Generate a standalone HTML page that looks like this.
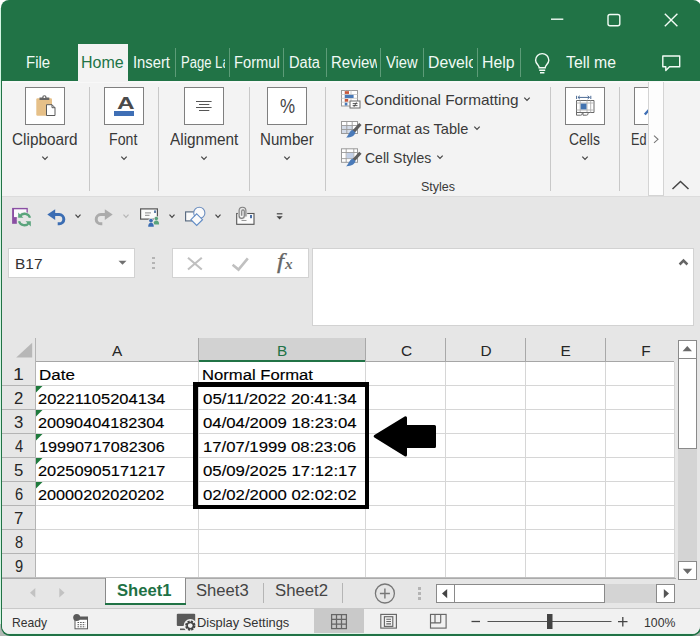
<!DOCTYPE html><html><head><meta charset="utf-8"><title>Excel</title><style>
html,body{margin:0;padding:0;background:#fff;}#w{position:relative;width:700px;height:636px;overflow:hidden;background:#fff;font-family:"Liberation Sans",sans-serif;}#w div,#w svg,#w span{position:absolute;display:block;}#w span.t{white-space:nowrap;line-height:1;transform-origin:0 0;}#w span.c{overflow:hidden;}#w span.c span.t{left:0;top:0;}
</style></head><body><div id="w">
<div style="left:0px;top:0px;width:700px;height:636px;background:#ffffff;"></div>
<div style="left:0px;top:8px;width:1px;height:620px;background:#d3f5e2;"></div>
<div style="left:0px;top:624px;width:12px;height:12px;background:#b3b9b5;"></div>
<div style="left:688px;top:624px;width:12px;height:12px;background:#a9b3ad;"></div>
<div style="left:1px;top:0px;width:700px;height:636px;background:#217346;border-radius:8px 8px 9px 9px;"></div>
<div style="left:2px;top:81px;width:698px;height:553.4px;background:#e6e6e6;border-radius:0 0 8px 8px;"></div>
<div style="left:2px;top:81px;width:698px;height:115px;background:#f3f3f3;"></div>
<div style="left:2px;top:81px;width:698px;height:2px;background:#f8f8f8;"></div>
<div style="left:2px;top:196px;width:698px;height:1px;background:#dcdcdc;"></div>
<div style="left:78px;top:44px;width:50px;height:38px;background:#f3f3f3;"></div>
<div style="left:175px;top:48px;width:1px;height:29px;background:#5d9c78;"></div>
<div style="left:229px;top:48px;width:1px;height:29px;background:#5d9c78;"></div>
<div style="left:283px;top:48px;width:1px;height:29px;background:#5d9c78;"></div>
<div style="left:326px;top:48px;width:1px;height:29px;background:#5d9c78;"></div>
<div style="left:380px;top:48px;width:1px;height:29px;background:#5d9c78;"></div>
<div style="left:423px;top:48px;width:1px;height:29px;background:#5d9c78;"></div>
<div style="left:477px;top:48px;width:1px;height:29px;background:#5d9c78;"></div>
<div style="left:520px;top:48px;width:1px;height:29px;background:#5d9c78;"></div>
<svg style="left:540px;top:5px;" width="150" height="30" viewBox="540 5 150 30"><g stroke="#f2fbf5" stroke-width="1.4" fill="none"><path d="M551 19.2H563.3"/><rect x="608" y="14.5" width="11.8" height="11.3" rx="2"/><path d="M664.8 13.8L677.4 26.2M677.4 13.8L664.8 26.2"/></g></svg>
<svg style="left:530px;top:50px;" width="26" height="26" viewBox="530 50 26 26"><g stroke="#f2fbf5" stroke-width="1.4" fill="none"><path d="M539.2 67.8C539.2 65 535.6 63.8 535.6 60.2a6.6 6.6 0 0 1 13.2 0c0 3.6-3.6 4.800-3.600 7.600z"/><path d="M539.2 70.300h6M540 72.700h4.400"/></g></svg>
<svg style="left:658px;top:52px;" width="28" height="22" viewBox="658 52 28 22"><path d="M662.800 56H679.700V66.800H669.500L665.800 70.400V66.800H662.800z" stroke="#f2fbf5" stroke-width="1.400" fill="none" stroke-linejoin="round"/></svg>
<div style="left:89px;top:87px;width:1px;height:104px;background:#c8c8c8;"></div>
<div style="left:158px;top:87px;width:1px;height:104px;background:#c8c8c8;"></div>
<div style="left:249px;top:87px;width:1px;height:104px;background:#c8c8c8;"></div>
<div style="left:325px;top:87px;width:1px;height:104px;background:#c8c8c8;"></div>
<div style="left:550px;top:87px;width:1px;height:104px;background:#c8c8c8;"></div>
<div style="left:619px;top:87px;width:1px;height:104px;background:#c8c8c8;"></div>
<div style="left:25px;top:87px;width:40px;height:38px;background:#ffffff;box-sizing:border-box;border:1px solid #7f7f7f;"></div>
<svg style="left:39px;top:153.2px;" width="12" height="10" viewBox="39 153.2 12 10"><path d="M42.3 156.75L45 159.64999999999998L47.7 156.75" stroke="#444" stroke-width="1.2" fill="none"/></svg>
<div style="left:104px;top:87px;width:40px;height:38px;background:#ffffff;box-sizing:border-box;border:1px solid #7f7f7f;"></div>
<svg style="left:118px;top:153.2px;" width="12" height="10" viewBox="118 153.2 12 10"><path d="M121.3 156.75L124 159.64999999999998L126.7 156.75" stroke="#444" stroke-width="1.2" fill="none"/></svg>
<div style="left:184px;top:87px;width:40px;height:38px;background:#ffffff;box-sizing:border-box;border:1px solid #7f7f7f;"></div>
<svg style="left:198px;top:153.2px;" width="12" height="10" viewBox="198 153.2 12 10"><path d="M201.3 156.75L204 159.64999999999998L206.7 156.75" stroke="#444" stroke-width="1.2" fill="none"/></svg>
<div style="left:267px;top:87px;width:40px;height:38px;background:#ffffff;box-sizing:border-box;border:1px solid #7f7f7f;"></div>
<svg style="left:281px;top:153.2px;" width="12" height="10" viewBox="281 153.2 12 10"><path d="M284.3 156.75L287 159.64999999999998L289.7 156.75" stroke="#444" stroke-width="1.2" fill="none"/></svg>
<div style="left:565px;top:87px;width:40px;height:38px;background:#ffffff;box-sizing:border-box;border:1px solid #7f7f7f;"></div>
<svg style="left:579px;top:153.2px;" width="12" height="10" viewBox="579 153.2 12 10"><path d="M582.3 156.75L585 159.64999999999998L587.7 156.75" stroke="#444" stroke-width="1.2" fill="none"/></svg>
<div style="left:634px;top:87px;width:14px;height:38px;background:#ffffff;box-sizing:border-box;border:1px solid #7f7f7f;border-right:none;"></div>
<svg style="left:25px;top:87px;" width="40" height="38" viewBox="25 87 40 38"><rect x="36.300" y="98.200" width="15.700" height="17.600" rx="1.200" fill="#e6c088"/><path d="M39.500 100v-2.600h2.700a2.200 2.200 0 0 1 4.400 0h2.700v2.600z" fill="#666"/><circle cx="44.400" cy="97.200" r="0.900" fill="#fff"/><path d="M46.500 104.700h5.500l3 3v7.800h-8.500z" fill="#fff" stroke="#5a5a5a" stroke-width="1"/><path d="M52 104.700v3h3" fill="none" stroke="#5a5a5a" stroke-width="1"/></svg>
<div style="left:114px;top:111px;width:20px;height:4.5px;background:#3f6fb5;"></div>
<svg style="left:184px;top:87px;" width="40" height="38" viewBox="184 87 40 38"><g stroke="#555" stroke-width="1"><path d="M196 101.500h15.600M199 104.500h10.300M196 107.500h15.600M199 110.500h10.300"/></g></svg>
<svg style="left:565px;top:87px;" width="40" height="38" viewBox="565 87 40 38"><g fill="none" stroke="#4a6a94" stroke-width="1"><path d="M578 97.400h11.500M576.600 95.800v3.200M590.800 95.800v3.200"/><path d="M579.800 95.800l-1.800 1.600l1.800 1.600M587.600 95.800l1.800 1.600l-1.800 1.600"/></g><path d="M576.500 100.500h17.500v12h-6v1.200a1.500 1.500 0 0 1-1.500 1.500h-3.500v-2.700h-0.800v1.200a1.500 1.500 0 0 1-1.500 1.500h-4.200z" fill="#fff" stroke="#6a6a6a" stroke-width="1"/><path d="M576.500 103h17.500M576.500 110h17.500M580.200 100.500v12M587 100.500v12M590.700 100.500v12" fill="none" stroke="#b0b0b0" stroke-width="0.900"/><path d="M576.500 112.500h11.500" stroke="#6a6a6a" stroke-width="1"/><rect x="580.700" y="103.600" width="5.800" height="5.800" fill="#4273b0"/></svg>
<svg style="left:634px;top:87px;" width="15" height="38" viewBox="634 87 15 38"><path d="M644.800 114.500l4-4.500" stroke="#3f6fb5" stroke-width="2.400" fill="none"/></svg>
<svg style="left:521px;top:94px;" width="12" height="10" viewBox="521 94 12 10"><path d="M524.3 97.55L527 100.45L529.7 97.55" stroke="#444" stroke-width="1.2" fill="none"/></svg>
<svg style="left:471px;top:123px;" width="12" height="10" viewBox="471 123 12 10"><path d="M474.3 126.55L477 129.45L479.7 126.55" stroke="#444" stroke-width="1.2" fill="none"/></svg>
<svg style="left:433.6px;top:152px;" width="12" height="10" viewBox="433.6 152 12 10"><path d="M436.90000000000003 155.55L439.6 158.45L442.3 155.55" stroke="#444" stroke-width="1.2" fill="none"/></svg>
<svg style="left:336px;top:86px;" width="30" height="84" viewBox="336 86 30 84"><rect x="341.500" y="90.500" width="16" height="15.500" fill="#fff" stroke="#9a9a9a" stroke-width="1"/><path d="M341.500 94.500h16M341.500 98.300h16M341.500 102.200h16M345.300 90.500v15.500M351 90.500v15.500" stroke="#c9c9c9" stroke-width="0.900" fill="none"/><rect x="344.800" y="91.200" width="4.200" height="2.700" fill="#c8573a"/><rect x="344.800" y="94.900" width="8.800" height="3.100" fill="#4a7ab8"/><rect x="344.800" y="99" width="3.400" height="2.700" fill="#c8573a"/><rect x="344.800" y="102.800" width="2.600" height="2.700" fill="#4a7ab8"/><rect x="350" y="101" width="10" height="7" fill="#fff" stroke="#6a6a6a" stroke-width="1"/><path d="M352.700 103.600h4.800M352.700 105.600h4.800M356.400 102.400l-2.400 4.400" stroke="#444" stroke-width="0.900" fill="none"/><rect x="341.500" y="121.500" width="16" height="12" fill="#fff" stroke="#9a9a9a" stroke-width="1"/><rect x="342" y="125.500" width="11" height="7.500" fill="#d3dbe8"/><path d="M341.500 125.500h16M341.500 129.500h16M346.800 121.500v12M352.200 121.500v12" stroke="#9a9a9a" stroke-width="0.900" fill="none"/><g transform="translate(0,0)"><path d="M360.400 124l-6.800 7.600" stroke="#5e5e5e" stroke-width="3.200" stroke-linecap="butt" fill="none"/><path d="M352.300 129.800l3.200 2.600c-0.800 3-4 5.400-9.600 5.200c2.600-1.400 2.600-5.400 6.400-7.800z" fill="#4a7ab8"/></g><rect x="341.500" y="148.800" width="16" height="13.500" fill="#fff" stroke="#9a9a9a" stroke-width="1"/><path d="M341.500 152.500h16M341.500 158.600h16M346.200 148.800v13.500M353.800 148.800v13.500" stroke="#9a9a9a" stroke-width="0.900" fill="none"/><rect x="346.700" y="153" width="6.700" height="5.200" fill="#c3d0e6"/><g transform="translate(0,28.7)"><path d="M360.400 124l-6.800 7.600" stroke="#5e5e5e" stroke-width="3.200" stroke-linecap="butt" fill="none"/><path d="M352.300 129.800l3.200 2.600c-0.800 3-4 5.400-9.600 5.200c2.600-1.400 2.600-5.400 6.400-7.800z" fill="#4a7ab8"/></g></svg>
<svg style="left:0px;top:197px;" width="700" height="43" viewBox="0 197 700 43"><rect x="12.100" y="207.900" width="15.700" height="15.900" fill="#8a4fa3"/><rect x="14" y="209.300" width="12.500" height="7.800" fill="#fbf9fc"/><rect x="16.800" y="217.100" width="11.500" height="7.500" fill="#e6e6e6"/><circle cx="24.500" cy="219.500" r="7.600" fill="#e6e6e6"/><g fill="none" stroke="#5aa47c" stroke-width="2.300"><path d="M30 217.800a5.600 5.600 0 0 0-10-1.600"/><path d="M19 221.200a5.600 5.600 0 0 0 10 1.600"/></g><path d="M18.200 212.600v5.200h5.200z" fill="#5aa47c"/><path d="M30.800 226.400v-5.200h-5.200z" fill="#5aa47c"/><path d="M47.300 214.600L55.200 209.300V219.900z" fill="#3b6db3"/><path d="M54.500 214.600h4.700a4.600 4.600 0 0 1 0 9.200h-1.500" fill="none" stroke="#3b6db3" stroke-width="3"/><path d="M112.700 214.600L104.800 209.300V219.900z" fill="#ababab"/><path d="M105.500 214.600h-4.700a4.600 4.600 0 0 0 0 9.200h1.500" fill="none" stroke="#ababab" stroke-width="3"/><rect x="140.600" y="208.900" width="16.800" height="10.200" fill="#fbfbfb" stroke="#555" stroke-width="1.200"/><path d="M145 212.900h6M145 215.300h4.500" stroke="#8a8a8a" stroke-width="1"/><rect x="154.200" y="210.400" width="1.600" height="2.600" fill="#3a5f95"/><circle cx="156.300" cy="218.600" r="2.500" fill="#e6e6e6"/><path d="M152.600 225.200c0-3.600 1.300-5 3.700-5s3.700 1.400 3.700 5z" fill="#e6e6e6"/><circle cx="156.300" cy="218.600" r="1.750" fill="#5aa47c"/><path d="M153.500 224.400c0-2.700 1-3.800 2.800-3.800s2.800 1.100 2.800 3.800z" fill="#5aa47c"/><circle cx="151" cy="220.600" r="2.600" fill="#e6e6e6"/><path d="M147.300 227.300c0-3.700 1.300-5.200 3.700-5.200s3.700 1.500 3.700 5.200z" fill="#e6e6e6"/><circle cx="151" cy="220.600" r="1.850" fill="#3b6db3"/><path d="M148.200 226.700c0-2.800 1-4 2.800-4s2.800 1.200 2.800 4z" fill="#3b6db3"/><rect x="185.600" y="211.900" width="9.200" height="9" fill="#fafafa" stroke="#586a80" stroke-width="1.150"/><circle cx="199.300" cy="212.900" r="5.600" fill="#fafafa" stroke="#6d8fc0" stroke-width="1.100"/><path d="M196.700 213.900l5.800 5.800l-5.800 5.800l-5.800-5.800z" fill="#fafafa" stroke="#5f8ac4" stroke-width="1.100"/><rect x="236.700" y="213.500" width="17.300" height="10.800" fill="#fbfbfb" stroke="#555" stroke-width="1.100"/><rect x="250" y="215" width="2" height="3.200" fill="#4a6fa5"/><path d="M241.500 220.500h5" stroke="#999" stroke-width="1"/><path d="M245.900 216.500V210.600a3.400 3.400 0 0 0-6.800 0V215.800a2.600 2.600 0 0 0 5.200 0V211.200a1.300 1.300 0 0 0-2.600 0v4.600" fill="none" stroke="#e6e6e6" stroke-width="2.600"/><path d="M245.900 216.500V210.600a3.400 3.400 0 0 0-6.800 0V215.800a2.600 2.600 0 0 0 5.200 0V211.200a1.300 1.300 0 0 0-2.600 0v4.600" fill="none" stroke="#808080" stroke-width="1.150"/><path d="M276.800 213.800h5.600" stroke="#444" stroke-width="1.200"/><path d="M276.500 216.200h6.200l-3.100 3.300z" fill="#444"/></svg>
<svg style="left:72px;top:211.3px;" width="12" height="10" viewBox="72 211.3 12 10"><path d="M75.5 214.95000000000002L78 217.65L80.5 214.95000000000002" stroke="#444" stroke-width="1.2" fill="none"/></svg>
<svg style="left:120px;top:211.3px;" width="12" height="10" viewBox="120 211.3 12 10"><path d="M123.5 214.95000000000002L126 217.65L128.5 214.95000000000002" stroke="#b5b5b5" stroke-width="1.2" fill="none"/></svg>
<svg style="left:166px;top:211.3px;" width="12" height="10" viewBox="166 211.3 12 10"><path d="M169.5 214.95000000000002L172 217.65L174.5 214.95000000000002" stroke="#444" stroke-width="1.2" fill="none"/></svg>
<svg style="left:212px;top:211.3px;" width="12" height="10" viewBox="212 211.3 12 10"><path d="M215.5 214.95000000000002L218 217.65L220.5 214.95000000000002" stroke="#444" stroke-width="1.2" fill="none"/></svg>
<div style="left:8px;top:248px;width:127px;height:30px;background:#fff;box-sizing:border-box;border:1px solid #d2d2d2;"></div>
<div style="left:152px;top:256.5px;width:3px;height:2.5px;background:#b4b4b4;"></div>
<div style="left:152px;top:261.5px;width:3px;height:2.5px;background:#b4b4b4;"></div>
<div style="left:152px;top:266.5px;width:3px;height:2.5px;background:#b4b4b4;"></div>
<div style="left:172px;top:248px;width:137px;height:30px;background:#fff;box-sizing:border-box;border:1px solid #d2d2d2;"></div>
<svg style="left:100px;top:248px;" width="220" height="30" viewBox="100 248 220 30"><path d="M118.500 260.800h8l-4 4z" fill="#707070"/><path d="M188 257.700L201.800 269.500M201.800 257.700L188 269.500" stroke="#c0c0c0" stroke-width="2.100" fill="none"/><path d="M232.600 264.800L238.500 269.600L247.800 258.300" stroke="#c0c0c0" stroke-width="2.600" fill="none"/></svg>
<div style="left:312px;top:248px;width:382px;height:78px;background:#fff;box-sizing:border-box;border:1px solid #d2d2d2;"></div>
<svg style="left:676px;top:256px;" width="14" height="12" viewBox="676 256 14 12"><path d="M679.600 264.500L683.500 260.600L687.400 264.500" stroke="#666" stroke-width="2.500" fill="none"/></svg>
<div style="left:36px;top:362px;width:638px;height:216px;background:#fff;"></div>
<div style="left:199px;top:338px;width:166px;height:23px;background:#d2d2d2;"></div>
<div style="left:36px;top:361px;width:638px;height:1px;background:#a6a6a6;"></div>
<div style="left:199px;top:360px;width:167px;height:2px;background:#217346;"></div>
<div style="left:35px;top:338px;width:1px;height:240px;background:#b4b4b4;"></div>
<div style="left:198px;top:338px;width:1px;height:24px;background:#a8a8a8;"></div>
<div style="left:198px;top:362px;width:1px;height:216px;background:#d6d6d6;"></div>
<div style="left:365px;top:338px;width:1px;height:24px;background:#a8a8a8;"></div>
<div style="left:365px;top:362px;width:1px;height:216px;background:#d6d6d6;"></div>
<div style="left:445px;top:338px;width:1px;height:24px;background:#a8a8a8;"></div>
<div style="left:445px;top:362px;width:1px;height:216px;background:#d6d6d6;"></div>
<div style="left:525px;top:338px;width:1px;height:24px;background:#a8a8a8;"></div>
<div style="left:525px;top:362px;width:1px;height:216px;background:#d6d6d6;"></div>
<div style="left:605px;top:338px;width:1px;height:24px;background:#a8a8a8;"></div>
<div style="left:605px;top:362px;width:1px;height:216px;background:#d6d6d6;"></div>
<div style="left:674px;top:362px;width:1px;height:216px;background:#d6d6d6;"></div>
<div style="left:2px;top:385px;width:33px;height:1px;background:#b4b4b4;"></div>
<div style="left:36px;top:385px;width:638px;height:1px;background:#d6d6d6;"></div>
<div style="left:2px;top:409px;width:33px;height:1px;background:#b4b4b4;"></div>
<div style="left:36px;top:409px;width:638px;height:1px;background:#d6d6d6;"></div>
<div style="left:2px;top:433px;width:33px;height:1px;background:#b4b4b4;"></div>
<div style="left:36px;top:433px;width:638px;height:1px;background:#d6d6d6;"></div>
<div style="left:2px;top:457px;width:33px;height:1px;background:#b4b4b4;"></div>
<div style="left:36px;top:457px;width:638px;height:1px;background:#d6d6d6;"></div>
<div style="left:2px;top:481px;width:33px;height:1px;background:#b4b4b4;"></div>
<div style="left:36px;top:481px;width:638px;height:1px;background:#d6d6d6;"></div>
<div style="left:2px;top:505px;width:33px;height:1px;background:#b4b4b4;"></div>
<div style="left:36px;top:505px;width:638px;height:1px;background:#d6d6d6;"></div>
<div style="left:2px;top:529px;width:33px;height:1px;background:#b4b4b4;"></div>
<div style="left:36px;top:529px;width:638px;height:1px;background:#d6d6d6;"></div>
<div style="left:2px;top:553px;width:33px;height:1px;background:#b4b4b4;"></div>
<div style="left:36px;top:553px;width:638px;height:1px;background:#d6d6d6;"></div>
<div style="left:2px;top:577px;width:33px;height:1px;background:#b4b4b4;"></div>
<div style="left:36px;top:577px;width:638px;height:1px;background:#d6d6d6;"></div>
<div style="left:2px;top:577px;width:673px;height:1px;background:#bfbfbf;"></div>
<svg style="left:14px;top:340px;" width="22" height="22" viewBox="14 340 22 22"><path d="M32.200 342.800v14.800h-16z" fill="#b7b7b7"/></svg>
<svg style="left:36px;top:386px;" width="7" height="7" viewBox="0 0 7 7"><path d="M0 0h6.500L0 6.500z" fill="#1e7a3c"/></svg>
<svg style="left:36px;top:410px;" width="7" height="7" viewBox="0 0 7 7"><path d="M0 0h6.500L0 6.500z" fill="#1e7a3c"/></svg>
<svg style="left:36px;top:434px;" width="7" height="7" viewBox="0 0 7 7"><path d="M0 0h6.500L0 6.500z" fill="#1e7a3c"/></svg>
<svg style="left:36px;top:458px;" width="7" height="7" viewBox="0 0 7 7"><path d="M0 0h6.500L0 6.500z" fill="#1e7a3c"/></svg>
<svg style="left:36px;top:482px;" width="7" height="7" viewBox="0 0 7 7"><path d="M0 0h6.500L0 6.500z" fill="#1e7a3c"/></svg>
<div style="left:678px;top:449px;width:19px;height:113px;background:#d4d4d4;"></div>
<div style="left:678px;top:340px;width:19px;height:19px;background:#fff;box-sizing:border-box;border:1px solid #8a8a8a;"></div>
<div style="left:678px;top:359px;width:19px;height:90px;background:#fff;box-sizing:border-box;border:1px solid #8a8a8a;border-top:none;"></div>
<div style="left:678px;top:561px;width:19px;height:19px;background:#fff;box-sizing:border-box;border:1px solid #8a8a8a;"></div>
<svg style="left:678px;top:340px;" width="19" height="240" viewBox="678 340 19 240"><path d="M682.600 351.300h9.400l-4.700-5.300z" fill="#6a6a6a"/><path d="M682.800 568.700h9.400l-4.700 5.300z" fill="#6a6a6a"/></svg>
<svg style="left:20px;top:580px;" width="60" height="26" viewBox="20 580 60 26"><path d="M35.300 588v9.500L30 592.700z" fill="#c2c2c2"/><path d="M59.300 588v9.500L64.600 592.700z" fill="#c2c2c2"/></svg>
<div style="left:2px;top:578px;width:674px;height:1px;background:#ababab;"></div>
<div style="left:106px;top:578px;width:79px;height:25px;background:#fff;"></div>
<div style="left:105px;top:603px;width:81px;height:2px;background:#217346;"></div>
<div style="left:105px;top:578px;width:1px;height:25px;background:#8a8a8a;"></div>
<div style="left:185px;top:578px;width:1px;height:25px;background:#8a8a8a;"></div>
<div style="left:263px;top:583px;width:1px;height:20px;background:#b5b5b5;"></div>
<div style="left:342px;top:583px;width:1px;height:20px;background:#b5b5b5;"></div>
<svg style="left:370px;top:580px;" width="30" height="28" viewBox="370 580 30 28"><circle cx="384.900" cy="593.500" r="9.500" fill="none" stroke="#777" stroke-width="1.300"/><path d="M384.900 588.500v10M379.900 593.500h10" stroke="#777" stroke-width="1.400"/></svg>
<div style="left:418px;top:586.5px;width:3px;height:3px;background:#b4b4b4;"></div>
<div style="left:418px;top:591.5px;width:3px;height:3px;background:#b4b4b4;"></div>
<div style="left:418px;top:596.5px;width:3px;height:3px;background:#b4b4b4;"></div>
<div style="left:604px;top:584px;width:52px;height:19px;background:#d4d4d4;"></div>
<div style="left:436px;top:584px;width:19px;height:19px;background:#fff;box-sizing:border-box;border:1px solid #8a8a8a;"></div>
<div style="left:454px;top:584px;width:151px;height:19px;background:#fff;box-sizing:border-box;border:1px solid #8a8a8a;"></div>
<div style="left:656px;top:584px;width:19px;height:19px;background:#fff;box-sizing:border-box;border:1px solid #8a8a8a;"></div>
<svg style="left:436px;top:584px;" width="240" height="19" viewBox="436 584 240 19"><path d="M447.200 589v9.200L442 593.600z" fill="#444"/><path d="M663.800 589v9.200L669 593.600z" fill="#555"/></svg>
<div style="left:2px;top:609px;width:698px;height:25.4px;background:#f1f1f1;border-radius:0 0 8px 8px;"></div>
<div style="left:10px;top:633px;width:682px;height:1px;background:#e2f3e9;"></div>
<div style="left:2px;top:608px;width:698px;height:1px;background:#c9c9c9;"></div>
<div style="left:314px;top:609px;width:50px;height:24.4px;background:#c9c9c9;"></div>
<svg style="left:0px;top:609px;" width="700" height="27" viewBox="0 609 700 27"><rect x="75" y="619" width="12.500" height="9.800" fill="#fff" stroke="#5a5a5a" stroke-width="1"/><path d="M77.500 622.500h8M77.500 624.700h8M77.500 626.800h8" stroke="#5a5a5a" stroke-width="1" stroke-dasharray="1.600 1"/><circle cx="76.700" cy="617.400" r="3.500" fill="#5a5a5a"/><rect x="76.500" y="616.500" width="11.500" height="3" fill="#5a5a5a"/><rect x="176.800" y="613.800" width="18.400" height="12.300" rx="1" fill="#5a5a5a"/><path d="M180 629.300h7" stroke="#5a5a5a" stroke-width="1.600"/><circle cx="190.300" cy="625.600" r="6.600" fill="#f1f1f1"/><circle cx="190.300" cy="625.600" r="3.900" fill="none" stroke="#444" stroke-width="2.600" stroke-dasharray="2 1.060"/><circle cx="190.300" cy="625.600" r="3.200" fill="none" stroke="#444" stroke-width="1.500"/><g fill="none" stroke="#666" stroke-width="1.250"><rect x="331.600" y="614.600" width="14.800" height="14"/><path d="M331.600 619.300h14.800M331.600 624h14.800M336.500 614.600v14M341.500 614.600v14"/></g><g fill="none" stroke="#666" stroke-width="1.150"><rect x="380.800" y="614.400" width="15.600" height="13.700"/><rect x="384.400" y="616.700" width="8.400" height="9.700"/><path d="M386.300 619.200h4.700M386.300 621.500h4.700M386.300 623.800h4.700"/></g><g fill="none" stroke="#666" stroke-width="1.150"><rect x="430.500" y="614.400" width="15.600" height="13.700"/><path d="M435 614.400v8.400M440.700 614.400v8.400M430.500 622.800h10.200"/></g><path d="M471.500 621.500h8.500" stroke="#444" stroke-width="1.300"/><path d="M487.500 621.500h124" stroke="#555" stroke-width="1"/><rect x="547" y="614" width="5.500" height="15" fill="#444"/><path d="M618 621.700h9.500M622.800 617v9.500" stroke="#444" stroke-width="1.300"/></svg>
<span class="t" id="t0" style="left:26px;top:55px;font-size:15.6px;color:#f1faf5;font-weight:400;font-family:'Liberation Sans', sans-serif;transform:scaleX(0.9583);">File</span>
<span class="t" id="t1" style="left:81px;top:55px;font-size:15.6px;color:#217346;font-weight:400;font-family:'Liberation Sans', sans-serif;transform:scaleX(1.0250);">Home</span>
<span class="t" id="t2" style="left:133px;top:55px;font-size:15.6px;color:#f1faf5;font-weight:400;font-family:'Liberation Sans', sans-serif;transform:scaleX(0.9474);">Insert</span>
<span class="c" style="left:180.75px;top:55px;width:44.45px;height:20.3px;"><span class="t" id="t3" style="font-size:15.6px;color:#f1faf5;font-weight:400;font-family:'Liberation Sans', sans-serif;transform:scaleX(0.8373);">Page La</span></span>
<span class="t" id="t4" style="left:233.75px;top:55px;font-size:15.6px;color:#f1faf5;font-weight:400;font-family:'Liberation Sans', sans-serif;transform:scaleX(0.9419);">Formul</span>
<span class="t" id="t5" style="left:289px;top:55px;font-size:15.6px;color:#f1faf5;font-weight:400;font-family:'Liberation Sans', sans-serif;transform:scaleX(0.9375);">Data</span>
<span class="c" style="left:330.5px;top:55px;width:46px;height:20.3px;"><span class="t" id="t6" style="font-size:15.6px;color:#f1faf5;font-weight:400;font-family:'Liberation Sans', sans-serif;transform:scaleX(0.9612);">Review</span></span>
<span class="t" id="t7" style="left:386px;top:55px;font-size:15.6px;color:#f1faf5;font-weight:400;font-family:'Liberation Sans', sans-serif;transform:scaleX(0.9412);">View</span>
<span class="c" style="left:427.5px;top:55px;width:45.5px;height:20.3px;"><span class="t" id="t8" style="font-size:15.6px;color:#f1faf5;font-weight:400;font-family:'Liberation Sans', sans-serif;transform:scaleX(1.0108);">Develo</span></span>
<span class="t" id="t9" style="left:482px;top:55px;font-size:15.6px;color:#f1faf5;font-weight:400;font-family:'Liberation Sans', sans-serif;transform:scaleX(1.0164);">Help</span>
<span class="t" id="t10" style="left:565.75px;top:55px;font-size:15.6px;color:#f1faf5;font-weight:400;font-family:'Liberation Sans', sans-serif;transform:scaleX(1.0130);">Tell me</span>
<span class="t" id="t11" style="left:12px;top:132px;font-size:15.7px;color:#383838;font-weight:400;font-family:'Liberation Sans', sans-serif;transform:scaleX(0.9777);">Clipboard</span>
<span class="t" id="t12" style="left:108.5px;top:132px;font-size:15.7px;color:#383838;font-weight:400;font-family:'Liberation Sans', sans-serif;transform:scaleX(0.9032);">Font</span>
<span class="t" id="t13" style="left:169.5px;top:132px;font-size:15.7px;color:#383838;font-weight:400;font-family:'Liberation Sans', sans-serif;transform:scaleX(0.9784);">Alignment</span>
<span class="t" id="t14" style="left:259.5px;top:132px;font-size:15.7px;color:#383838;font-weight:400;font-family:'Liberation Sans', sans-serif;transform:scaleX(0.9640);">Number</span>
<span class="t" id="t15" style="left:569px;top:132px;font-size:15.7px;color:#383838;font-weight:400;font-family:'Liberation Sans', sans-serif;transform:scaleX(0.8857);">Cells</span>
<span class="t" id="t16" style="left:631.25px;top:132px;font-size:15.7px;color:#383838;font-weight:400;font-family:'Liberation Sans', sans-serif;transform:scaleX(0.8081);">Ed</span>
<span class="t" id="t17" style="left:116.5px;top:96px;font-size:15.7px;color:#4a4a4a;font-weight:700;font-family:'Liberation Sans', sans-serif;transform:scaleX(1.5516);">A</span>
<span class="t" id="t18" style="left:279.5px;top:96px;font-size:20px;color:#444;font-weight:400;font-family:'Liberation Sans', sans-serif;transform:scaleX(0.8475);">%</span>
<span class="t" id="t19" style="left:363.75px;top:92px;font-size:15.0px;color:#3a3a3a;font-weight:400;font-family:'Liberation Sans', sans-serif;transform:scaleX(1.0247);">Conditional Formatting</span>
<span class="t" id="t20" style="left:363.75px;top:121px;font-size:15.0px;color:#3a3a3a;font-weight:400;font-family:'Liberation Sans', sans-serif;transform:scaleX(0.9730);">Format as Table</span>
<span class="t" id="t21" style="left:364.75px;top:150px;font-size:15.0px;color:#3a3a3a;font-weight:400;font-family:'Liberation Sans', sans-serif;transform:scaleX(0.9343);">Cell Styles</span>
<span class="t" id="t22" style="left:420.5px;top:180px;font-size:13.3px;color:#3a3a3a;font-weight:400;font-family:'Liberation Sans', sans-serif;transform:scaleX(0.9402);">Styles</span>
<span class="t" id="t23" style="left:15px;top:256px;font-size:15.5px;color:#333;font-weight:400;font-family:'Liberation Sans', sans-serif;transform:scaleX(0.9967);">B17</span>
<span class="t" id="t24" style="left:276.75px;top:251px;font-size:21px;color:#666;font-weight:400;font-family:'Liberation Serif', serif;transform:scaleX(1.1908);font-style:italic;-webkit-text-stroke:0.3px #666;">f</span>
<span class="t" id="t25" style="left:285px;top:256px;font-size:15.5px;color:#6a6a6a;font-weight:400;font-family:'Liberation Serif', serif;transform:scaleX(0.9799);font-style:italic;font-weight:700;">x</span>
<span class="t" id="t26" style="left:112px;top:343px;font-size:15.4px;color:#262626;font-weight:400;font-family:'Liberation Sans', sans-serif;transform:scaleX(1.0000);width:10px;text-align:center;">A</span>
<span class="t" id="t27" style="left:277px;top:343px;font-size:15.4px;color:#217346;font-weight:400;font-family:'Liberation Sans', sans-serif;transform:scaleX(1.0000);width:10px;text-align:center;">B</span>
<span class="t" id="t28" style="left:401px;top:343px;font-size:15.4px;color:#262626;font-weight:400;font-family:'Liberation Sans', sans-serif;transform:scaleX(1.0000);width:10px;text-align:center;">C</span>
<span class="t" id="t29" style="left:480.5px;top:343px;font-size:15.4px;color:#262626;font-weight:400;font-family:'Liberation Sans', sans-serif;transform:scaleX(1.0000);width:10px;text-align:center;">D</span>
<span class="t" id="t30" style="left:560.5px;top:343px;font-size:15.4px;color:#262626;font-weight:400;font-family:'Liberation Sans', sans-serif;transform:scaleX(1.0000);width:10px;text-align:center;">E</span>
<span class="t" id="t31" style="left:641px;top:343px;font-size:15.4px;color:#262626;font-weight:400;font-family:'Liberation Sans', sans-serif;transform:scaleX(1.0000);width:10px;text-align:center;">F</span>
<span class="t" id="t32" style="left:13px;top:367px;font-size:15.8px;color:#262626;font-weight:400;font-family:'Liberation Sans', sans-serif;transform:scaleX(1.2358);">1</span>
<span class="t" id="t33" style="left:13.5px;top:391px;font-size:15.8px;color:#262626;font-weight:400;font-family:'Liberation Sans', sans-serif;transform:scaleX(1.0593);">2</span>
<span class="t" id="t34" style="left:13.5px;top:415px;font-size:15.8px;color:#262626;font-weight:400;font-family:'Liberation Sans', sans-serif;transform:scaleX(1.0593);">3</span>
<span class="t" id="t35" style="left:14.5px;top:439px;font-size:15.8px;color:#262626;font-weight:400;font-family:'Liberation Sans', sans-serif;transform:scaleX(0.9269);">4</span>
<span class="t" id="t36" style="left:13.5px;top:463px;font-size:15.8px;color:#262626;font-weight:400;font-family:'Liberation Sans', sans-serif;transform:scaleX(1.0593);">5</span>
<span class="t" id="t37" style="left:14.5px;top:487px;font-size:15.8px;color:#262626;font-weight:400;font-family:'Liberation Sans', sans-serif;transform:scaleX(0.9269);">6</span>
<span class="t" id="t38" style="left:13.5px;top:511px;font-size:15.8px;color:#262626;font-weight:400;font-family:'Liberation Sans', sans-serif;transform:scaleX(1.0593);">7</span>
<span class="t" id="t39" style="left:14.5px;top:535px;font-size:15.8px;color:#262626;font-weight:400;font-family:'Liberation Sans', sans-serif;transform:scaleX(0.9269);">8</span>
<span class="t" id="t40" style="left:14.5px;top:559px;font-size:15.8px;color:#262626;font-weight:400;font-family:'Liberation Sans', sans-serif;transform:scaleX(0.9269);">9</span>
<span class="t" id="t41" style="left:38.5px;top:367px;font-size:15.5px;color:#000;font-weight:400;font-family:'Liberation Sans', sans-serif;transform:scaleX(1.0947);-webkit-text-stroke:0.15px #000;">Date</span>
<span class="t" id="t42" style="left:202px;top:367px;font-size:15.5px;color:#000;font-weight:400;font-family:'Liberation Sans', sans-serif;transform:scaleX(1.0736);-webkit-text-stroke:0.15px #000;">Normal Format</span>
<span class="t" id="t43" style="left:38.25px;top:391px;font-size:15.5px;color:#000;font-weight:400;font-family:'Liberation Sans', sans-serif;transform:scaleX(1.0644);-webkit-text-stroke:0.15px #000;">20221105204134</span>
<span class="t" id="t44" style="left:202.75px;top:391px;font-size:15.5px;color:#000;font-weight:400;font-family:'Liberation Sans', sans-serif;transform:scaleX(1.0886);-webkit-text-stroke:0.15px #000;">05/11/2022 20:41:34</span>
<span class="t" id="t45" style="left:38.25px;top:415px;font-size:15.5px;color:#000;font-weight:400;font-family:'Liberation Sans', sans-serif;transform:scaleX(1.0471);-webkit-text-stroke:0.15px #000;">20090404182304</span>
<span class="t" id="t46" style="left:202.75px;top:415px;font-size:15.5px;color:#000;font-weight:400;font-family:'Liberation Sans', sans-serif;transform:scaleX(1.0803);-webkit-text-stroke:0.15px #000;">04/04/2009 18:23:04</span>
<span class="t" id="t47" style="left:39px;top:439px;font-size:15.5px;color:#000;font-weight:400;font-family:'Liberation Sans', sans-serif;transform:scaleX(1.0409);-webkit-text-stroke:0.15px #000;">19990717082306</span>
<span class="t" id="t48" style="left:202.5px;top:439px;font-size:15.5px;color:#000;font-weight:400;font-family:'Liberation Sans', sans-serif;transform:scaleX(1.0759);-webkit-text-stroke:0.15px #000;">17/07/1999 08:23:06</span>
<span class="t" id="t49" style="left:38.25px;top:463px;font-size:15.5px;color:#000;font-weight:400;font-family:'Liberation Sans', sans-serif;transform:scaleX(1.0555);-webkit-text-stroke:0.15px #000;">20250905171217</span>
<span class="t" id="t50" style="left:202.75px;top:463px;font-size:15.5px;color:#000;font-weight:400;font-family:'Liberation Sans', sans-serif;transform:scaleX(1.0809);-webkit-text-stroke:0.15px #000;">05/09/2025 17:12:17</span>
<span class="t" id="t51" style="left:38.25px;top:487px;font-size:15.5px;color:#000;font-weight:400;font-family:'Liberation Sans', sans-serif;transform:scaleX(1.0471);-webkit-text-stroke:0.15px #000;">20000202020202</span>
<span class="t" id="t52" style="left:202.75px;top:487px;font-size:15.5px;color:#000;font-weight:400;font-family:'Liberation Sans', sans-serif;transform:scaleX(1.0803);-webkit-text-stroke:0.15px #000;">02/02/2000 02:02:02</span>
<span class="t" id="t53" style="left:116.75px;top:582px;font-size:16.3px;color:#1e7145;font-weight:700;font-family:'Liberation Sans', sans-serif;transform:scaleX(1.0192);">Sheet1</span>
<span class="t" id="t54" style="left:196px;top:583px;font-size:15.8px;color:#444;font-weight:400;font-family:'Liberation Sans', sans-serif;transform:scaleX(1.0511);">Sheet3</span>
<span class="t" id="t55" style="left:275px;top:583px;font-size:15.8px;color:#444;font-weight:400;font-family:'Liberation Sans', sans-serif;transform:scaleX(1.0593);">Sheet2</span>
<span class="t" id="t56" style="left:11.5px;top:616px;font-size:13.3px;color:#333;font-weight:400;font-family:'Liberation Sans', sans-serif;transform:scaleX(0.9109);">Ready</span>
<span class="t" id="t57" style="left:197.25px;top:616px;font-size:13.3px;color:#333;font-weight:400;font-family:'Liberation Sans', sans-serif;transform:scaleX(0.9681);">Display Settings</span>
<span class="t" id="t58" style="left:644px;top:617px;font-size:12.6px;color:#333;font-weight:400;font-family:'Liberation Sans', sans-serif;transform:scaleX(0.9745);">100%</span>
<div style="left:648px;top:82px;width:16px;height:114px;background:#fdfdfd;box-sizing:border-box;border:1px solid #d4d4d4;border-top:none;"></div>
<svg style="left:650px;top:132px;" width="12" height="14" viewBox="650 132 12 14"><path d="M654 135.700L658 139.300L654 142.900" stroke="#777" stroke-width="1.100" fill="none"/></svg>
<svg style="left:668px;top:176px;" width="26" height="18" viewBox="668 176 26 18"><path d="M672.500 189L680.500 181.500L688.500 189" stroke="#444" stroke-width="1.500" fill="none"/></svg>
<div style="left:193px;top:382px;width:176px;height:126.7px;background:transparent;box-sizing:border-box;border:5px solid #000;border-right-width:4.800px;border-bottom-width:4.700px;"></div>
<svg style="left:368px;top:410px;" width="74" height="54" viewBox="368 410 74 54"><path d="M375.200 436.300L405.500 417.800V426.500H434.500V446.400H405.500V455.000z" fill="#000" stroke="#000" stroke-width="3" stroke-linejoin="round"/></svg>
</div></body></html>
